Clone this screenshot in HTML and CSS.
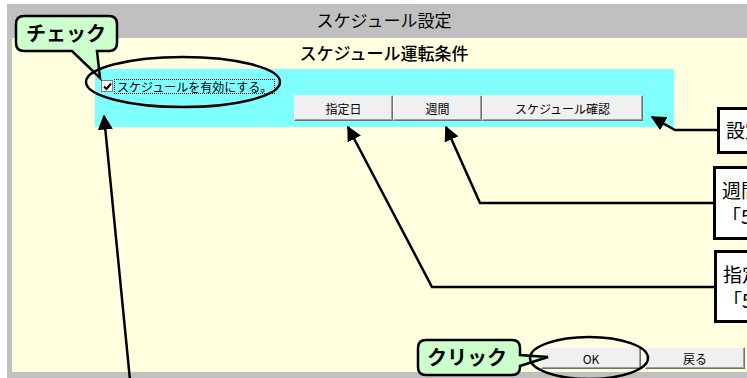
FILE: index.html
```html
<!DOCTYPE html>
<html lang="ja">
<head>
  <meta charset="UTF-8">
  <title>スケジュール設定</title>
  <link rel="stylesheet" href="styles.css">
</head>
<body>
  <div class="window">
    <div class="title-bar">スケジュール設定</div>
    <div class="content">
      <div class="subtitle">スケジュール運転条件</div>

      <div class="panel">
        <label class="check-row">
          <span class="checkbox">
            <svg width="9" height="9" viewBox="0 0 9 9"><path d="M1 4.5 L3.5 7 L8 1.5" fill="none" stroke="#000" stroke-width="2"/></svg>
          </span>
          <span class="check-label">スケジュールを有効にする。</span>
        </label>
        <div class="panel-buttons">
          <button class="btn btn-day">指定日</button>
          <button class="btn btn-week">週間</button>
          <button class="btn btn-confirm">スケジュール確認</button>
        </div>
      </div>

      <div class="footer">
        <button class="btn btn-foot">OK</button>
        <button class="btn btn-foot">戻る</button>
      </div>
    </div>
  </div>

  <!-- annotations -->
  <div class="note note-1">設定</div>
  <div class="note note-2">週間<br>「5</div>
  <div class="note note-3">指定<br>「5</div>

  <svg class="overlay" width="747" height="378" viewBox="0 0 747 378">
    <defs>
      <marker id="head" viewBox="0 0 10 10" refX="9" refY="5" markerWidth="6" markerHeight="6" orient="auto">
        <path d="M0 0 L10 5 L0 10 z" fill="#000"/>
      </marker>
    </defs>

    <!-- チェック callout -->
    <path d="M24 16 H109 Q117 16 117 24 V43 Q117 51 109 51 H97 L100 78 L72 51 H24 Q16 51 16 43 V24 Q16 16 24 16 z"
          fill="#ccffcc" stroke="#000" stroke-width="2.5"/>
    <text x="66" y="41" class="call-text" text-anchor="middle">チェック</text>
    <ellipse cx="183" cy="82" rx="97" ry="25" fill="none" stroke="#000" stroke-width="2.5"/>

    <!-- クリック callout -->
    <path d="M426 340 H512 Q520 340 520 348 V355 L548 357 L520 366 V367 Q520 375 512 375 H426 Q418 375 418 367 V348 Q418 340 426 340 z"
          fill="#ccffcc" stroke="#000" stroke-width="2.5"/>
    <text x="467" y="365" class="call-text" text-anchor="middle">クリック</text>
    <ellipse cx="589" cy="358" rx="59" ry="21" fill="none" stroke="#000" stroke-width="2.5"/>

    <!-- arrows -->
    <polyline points="130,380 104,116" fill="none" stroke="#000" stroke-width="2.5" marker-end="url(#head)"/>
    <polyline points="717,130 675,130 652,117" fill="none" stroke="#000" stroke-width="2.5" marker-end="url(#head)"/>
    <polyline points="713,203 480,203 446,127" fill="none" stroke="#000" stroke-width="2.5" marker-end="url(#head)"/>
    <polyline points="714,287 432,287 348,127" fill="none" stroke="#000" stroke-width="2.5" marker-end="url(#head)"/>
  </svg>
</body>
</html>
```

FILE: styles.css
```css
body {
  margin: 0;
  background: #fff;
  font-family: "Noto Sans CJK JP", "Liberation Sans", sans-serif;
  width: 747px;
  height: 378px;
  overflow: hidden;
  position: relative;
}

.window {
  margin: 4px 0 0 7px;
  width: 744px;
  background: #c0c0c0;
  padding: 0 0 8px 5px;
}

.title-bar {
  height: 34px;
  line-height: 32px;
  text-align: center;
  font-size: 17px;
  color: #000;
}

.content {
  background: #ffffe0;
  height: 334px;
  display: flex;
  flex-direction: column;
}

.subtitle {
  text-align: center;
  font-size: 17px;
  font-weight: 500;
  height: 31px;
  line-height: 30px;
}

.panel {
  margin-left: 83px;
  width: 579px;
  height: 58px;
  background: #80ffff;
  display: flex;
  flex-direction: column;
}

.check-row {
  display: flex;
  align-items: center;
  margin: 10px 0 0 6px;
  height: 14px;
}

.checkbox {
  width: 10px;
  height: 10px;
  background: #fff;
  border: 1px solid #808080;
  display: flex;
  align-items: center;
  justify-content: center;
}

.check-label {
  margin-left: 1px;
  font-size: 12px;
  line-height: 13px;
  border: 1px dotted #000;
  padding: 0 2px;
}

.panel-buttons {
  display: flex;
  margin: 2px 31px 0 auto;
}

.btn {
  font-family: inherit;
  font-size: 12px;
  color: #000;
  background: #f0f0f0;
  border: 1px solid;
  border-color: #fff #707070 #707070 #fff;
  box-shadow: inset -1px -1px 0 #a0a0a0;
  padding: 0;
  height: 26px;
}

.btn-day { width: 99px; }
.btn-week { width: 89px; }
.btn-confirm { width: 161px; }

.footer {
  margin-top: auto;
  margin-bottom: 3px;
  margin-left: 529px;
  display: flex;
  gap: 4px;
}

.btn-foot {
  width: 100px;
  height: 22px;
}

.note {
  position: absolute;
  background: #fff;
  border: 3px solid #000;
  font-size: 19px;
  line-height: 26px;
  padding: 3px 0 0 6px;
  width: 60px;
  white-space: nowrap;
  overflow: hidden;
  box-sizing: border-box;
}

.note-1 { left: 717px; top: 107px; height: 47px; padding-top: 7px; }
.note-2 { left: 713px; top: 166px; height: 74px; padding-top: 8px; }
.note-3 { left: 714px; top: 250px; height: 73px; padding-top: 8px; }

.overlay {
  position: absolute;
  top: 0;
  left: 0;
}

.call-text {
  font-family: "Noto Sans CJK JP", sans-serif;
  font-size: 20px;
  font-weight: bold;
}
```
